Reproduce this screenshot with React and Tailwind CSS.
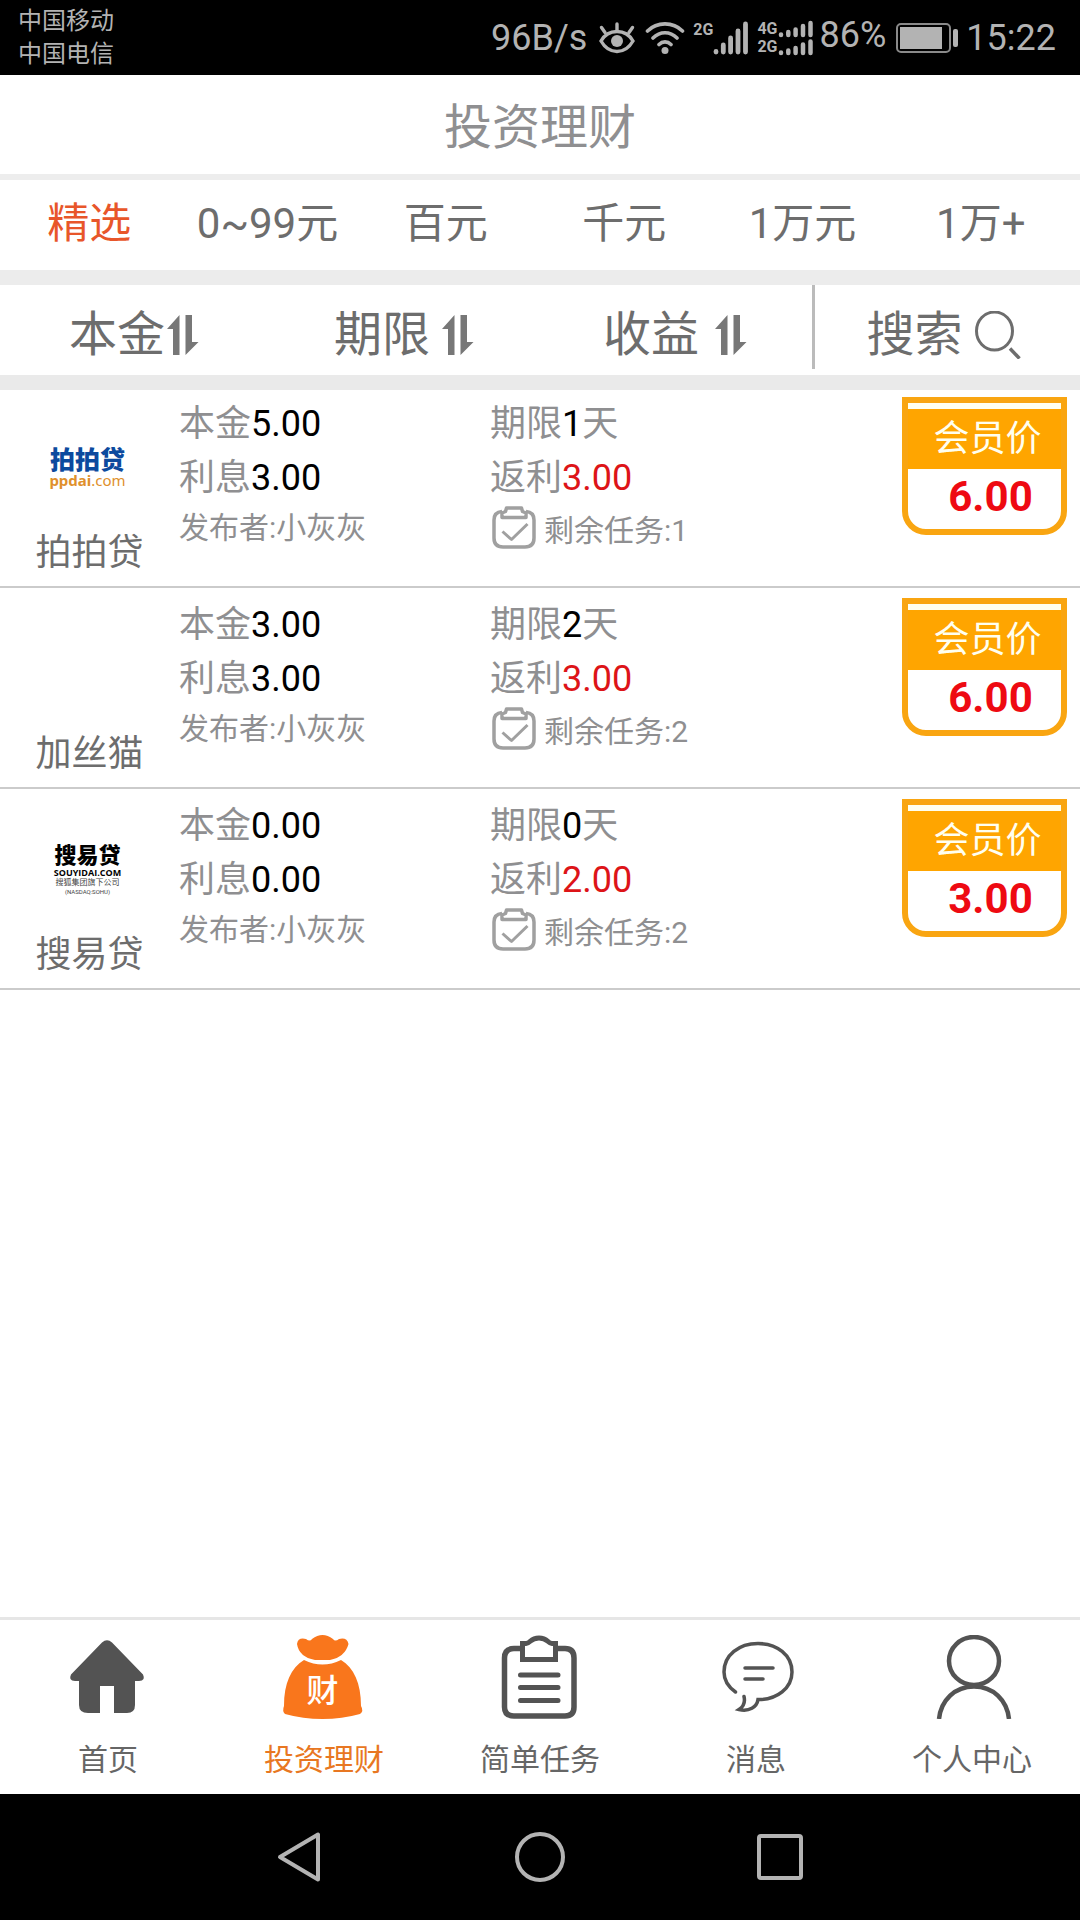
import { useState } from "react";
import clsx from "clsx";

const ranges = ["精选", "0~99元", "百元", "千元", "1万元", "1万+"];

const products = [
  { id: 1, name: "拍拍贷", Logo: PpdaiLogo, principal: "5.00", interest: "3.00", days: 1, rebate: "3.00", left: 1, price: "6.00" },
  { id: 2, name: "加丝猫", Logo: null, principal: "3.00", interest: "3.00", days: 2, rebate: "3.00", left: 2, price: "6.00" },
  { id: 3, name: "搜易贷", Logo: SouyidaiLogo, principal: "0.00", interest: "0.00", days: 0, rebate: "2.00", left: 2, price: "3.00" },
];

const navItems = [
  { label: "首页", Icon: HomeIcon },
  { label: "投资理财", Icon: BagIcon, active: true },
  { label: "简单任务", Icon: ClipboardIcon },
  { label: "消息", Icon: MessageIcon },
  { label: "个人中心", Icon: PersonIcon },
];

function PpdaiLogo() {
  return (
    <div className="flex flex-col items-center whitespace-nowrap">
      <span className="text-[25px] leading-[24px] font-black text-[#0c4a9e]">拍拍贷</span>
      <span className="font-['Noto_Sans'] text-[15px] leading-[14px] text-[#e0902c]">
        <b>ppdai</b>.com
      </span>
    </div>
  );
}

function SouyidaiLogo() {
  return (
    <div className="flex flex-col items-center whitespace-nowrap text-black">
      <span className="text-[22px] leading-[24px] font-black">搜易贷</span>
      <span className="font-['Open_Sans'] text-[9px] leading-[10px] font-bold">SOUYIDAI.COM</span>
      <span className="text-[8px] leading-[10px] text-[#444]">搜狐集团旗下公司</span>
      <span className="text-[6px] leading-[7px] text-[#444]">(NASDAQ:SOHU)</span>
    </div>
  );
}

function EyeIcon() {
  return (
    <svg className="h-8 w-9" viewBox="0 0 36 32" fill="none" stroke="currentColor" strokeWidth="3.4" strokeLinecap="round">
      <path d="M2 19C6 12 12 9.500 18 9.500S30 12 34 19C30 26 24 29.500 18 29.500S6 26 2 19Z" />
      <circle cx="18" cy="19" r="6" fill="currentColor" stroke="none" />
      <path d="M18 2v7M2.500 5.500l3.500 5M33.500 5.500l-3.500 5" />
    </svg>
  );
}

function WifiIcon() {
  return (
    <svg className="h-8 w-10" viewBox="0 0 40 32" fill="none" stroke="currentColor" strokeWidth="3.600" strokeLinecap="round">
      <path d="M2.500 9C12-.5 28-.5 37.500 9M8 16C15 9 25 9 32 16M14 22.500C17.500 19 22.500 19 26 22.500" />
      <circle cx="20" cy="28.500" r="3.500" fill="currentColor" stroke="none" />
    </svg>
  );
}

function SignalIcon() {
  return (
    <svg className="h-[34px] w-9" viewBox="0 0 36 34" stroke="currentColor" strokeWidth="4.800" strokeLinecap="round">
      <path d="M3 30.500v.5M10.300 24v7M17.600 17v14M25 10v21M32.500 3v28" />
    </svg>
  );
}

function DualSignalIcon() {
  return (
    <svg className="h-[36px] w-9" viewBox="0 0 36 36" stroke="currentColor" strokeWidth="4.500" strokeLinecap="round">
      <path d="M3 14.500v.5M10.300 12v3M17.600 9.500v5.500M25 6v9M32.500 3v12" />
      <path d="M3 32.500v.5M10.300 30.500v2.500M17.600 28v5M25 24.500v8.500M32.500 21.500v11.500" />
    </svg>
  );
}

function BatteryIcon() {
  return (
    <svg className="h-[30px] w-[62px]" viewBox="0 0 62 30" fill="none">
      <rect x="1" y="1" width="53" height="28" rx="4" stroke="#8a8a8a" strokeWidth="2" />
      <rect x="4" y="4" width="42" height="22" fill="currentColor" />
      <rect x="57" y="6" width="5" height="18" rx="2" fill="currentColor" />
    </svg>
  );
}

function SortIcon() {
  return (
    <svg className="h-10 w-8" viewBox="0 0 32 40" fill="#777">
      <path d="M12.500 0v40H6V14H0Z" />
      <path d="M18.500 0v40L31.500 27H25V0Z" />
    </svg>
  );
}

function SearchIcon() {
  return (
    <svg className="h-12 w-[46px]" viewBox="0 0 46 48" fill="none" stroke="#6d6d6d" strokeWidth="3">
      <ellipse cx="19.500" cy="20" rx="18" ry="19" />
      <path d="M35 37.500l9.500 10" strokeWidth="3.500" />
    </svg>
  );
}

function TaskIcon() {
  return (
    <svg className="h-[43px] w-11" viewBox="0 0 44 43" fill="none" stroke="#a0a0a0" strokeWidth="3.500" strokeLinejoin="round">
      <path d="M10 5.500C4 6 2 9 2 14v18c0 6 3 9 9 9h22c6 0 9-3 9-9V14c0-5-2-8-8-8.500" />
      <path d="M14.500 2h15l1 3.500 3.500 1.500v4.500h-24V7L13.500 5.500Z" />
      <path d="M10.500 25.500l9 8L35.500 18" strokeWidth="3" />
    </svg>
  );
}

function HomeIcon() {
  return (
    <svg className="size-21" viewBox="0 0 84 84" fill="#535353">
      <path d="M36 7.500Q41 3 46 7.500L77 39.500Q80 46 73 46H69V70Q69 78 61 78H48V51H34V78H22Q13 78 13 70V46H9Q2 46 5 39.500Z" />
    </svg>
  );
}

function BagIcon() {
  return (
    <svg className="size-21" viewBox="0 0 84 84" fill="#f9761c">
      <path d="M30 4Q40.500-4 51 4Q53 7 57 4Q65 2 66.500 9Q63 22 48 25H33Q17 22 15 9Q16 2 24 4Q28 7 30 4Z" />
      <path d="M22 25Q40.500 34 59 25C72 33 79 48 79 71Q82 76 78 79Q60 84 40.500 84T3 79Q0 76 2 71C2 48 9 33 22 25Z" />
      <text x="40.500" y="67" textAnchor="middle" fontSize="32" fontWeight="500" fill="#fff">财</text>
    </svg>
  );
}

function ClipboardIcon() {
  return (
    <svg className="size-21" viewBox="0 0 84 84" fill="none" stroke="#535353" strokeWidth="5.500">
      <path d="M24 13.500H16Q6.500 13.500 6.500 23V72Q6.500 81 16 81H67Q76 81 76 72V23Q76 13.500 67 13.500H58" />
      <path d="M24.500 8.500H28C33 8 32 3 41 3S49 8 54 8.500H57.500V24.500H24.500Z" strokeWidth="5" />
      <path d="M22.500 40H60M22.500 52.500H60M22.500 65.500H60" strokeLinecap="round" strokeWidth="5" />
    </svg>
  );
}

function MessageIcon() {
  return (
    <svg className="size-21" viewBox="0 0 84 84" fill="none" stroke="#535353" strokeWidth="3.500" strokeLinecap="round">
      <path d="M21.500 57C13 51 10 44 10 37C10 20 25 8.500 44 8.500S78 20 78 37C78 53 63 65 44 64.500C43 72 35 77 25 74.500Q32 70 30 61.500" />
      <path d="M31 33H59M31 44H49" />
    </svg>
  );
}

function PersonIcon() {
  return (
    <svg className="size-21" viewBox="0 0 84 84" fill="none" stroke="#535353" strokeWidth="4.500">
      <ellipse cx="44" cy="26" rx="25" ry="24" />
      <path d="M9 84C11 65 25 51.500 44 51.500S77 65 79 84" />
    </svg>
  );
}

function StatusBar() {
  return (
    <header className="flex h-[75px] items-center justify-between bg-black pl-[18px] pr-6 text-[#b3b3b3]">
      <div className="text-[24px] leading-[33px]">
        <p>中国移动</p>
        <p>中国电信</p>
      </div>
      <div className="flex items-center text-[36px] leading-[42px]">
        <span className="mr-3">96B/s</span>
        <EyeIcon />
        <span className="ml-2.5 mr-2"><WifiIcon /></span>
        <span className="mb-4 text-[16px] leading-[18px] font-bold">2G</span>
        <SignalIcon />
        <span className="ml-2 flex flex-col text-[16px] leading-[18px] font-bold">
          <span>4G</span>
          <span>2G</span>
        </span>
        <DualSignalIcon />
        <span className="ml-1.5 mb-1.5">86%</span>
        <span className="ml-2.5 mr-2"><BatteryIcon /></span>
        <span>15:22</span>
      </div>
    </header>
  );
}

function ProductRow({ item }) {
  const { Logo } = item;
  return (
    <li className="grid grid-cols-[179fr_311fr_590fr] border-b-2 border-[#cbcbcb] pt-2.5 text-[36px] leading-[54px] text-[#8f8f91] first:pt-[7px]">
      <div className="flex flex-col items-center">
        <div className="flex h-[129px] items-center pt-3 pr-1">{Logo && <Logo />}</div>
        <p className="pb-1.5 text-[#6d6d6d]">{item.name}</p>
      </div>
      <div>
        <p>本金<span className="text-black">{item.principal}</span></p>
        <p>利息<span className="text-black">{item.interest}</span></p>
        <p className="text-[30px] leading-[46px]">发布者:小灰灰</p>
      </div>
      <div className="flex items-start justify-between pr-[13px]">
        <div>
          <p>期限<span className="text-black">{item.days}</span>天</p>
          <p>返利<span className="text-[#dd1418]">{item.rebate}</span></p>
          <div className="flex items-start gap-2 pt-px pl-0.5 text-[30px] leading-[50px]">
            <TaskIcon />
            <p>剩余任务:{item.left}</p>
          </div>
        </div>
        <div className="w-[165px] rounded-b-3xl border-6 border-[#f9a511] bg-white text-center">
          <div className="border-t-6 border-[#fffff0] bg-[#ffa500] pl-1.5 text-[#fffff0]">
            <p className="h-15 leading-[60px]">会员价</p>
          </div>
          <p className="h-15 pl-3 text-[42px] leading-[56px] font-bold text-[#ee0a12]">{item.price}</p>
        </div>
      </div>
    </li>
  );
}

export default function App() {
  const [range, setRange] = useState(ranges[0]);

  return (
    <div className="flex min-h-screen flex-col bg-white font-[Roboto,'Noto_Sans_CJK_SC',sans-serif]">
      <StatusBar />

      <h1 className="border-b-6 border-[#ededed] pt-[18px] pb-[11px] text-center text-[48px] leading-[70px] text-[#8f8f91]">
        投资理财
      </h1>

      <nav className="grid h-[105px] grid-cols-6 border-b-15 border-[#ececec] pr-2.5 pb-1 text-[42px] text-[#6d6d6d]">
        {ranges.map((label) => (
          <button
            key={label}
            onClick={() => setRange(label)}
            className={clsx("whitespace-nowrap", range === label && "text-[#e8562a]")}
          >
            {label}
          </button>
        ))}
      </nav>

      <div className="grid h-[105px] grid-cols-4 border-b-15 border-[#eaeaea] text-[48px] leading-[60px] text-[#6d6d6d]">
        <button className="flex items-center justify-center gap-0.5 pt-2.5 pr-0.5">本金<SortIcon /></button>
        <button className="flex items-center justify-center gap-3 pt-2.5 pr-0.5">期限<SortIcon /></button>
        <button className="flex items-center justify-center gap-4 pt-2.5">收益<SortIcon /></button>
        <button className="mb-1.5 ml-0.5 flex items-center justify-center gap-3 border-l-3 border-[#bbb] pt-4 pr-2">搜索<SearchIcon /></button>
      </div>

      <main className="flex-1">
        <ul>
          {products.map((item) => (
            <ProductRow key={item.id} item={item} />
          ))}
        </ul>
      </main>

      <nav className="grid grid-cols-5 border-t-3 border-[#e6e6e6] pt-[15px] pb-2.5">
        {navItems.map(({ label, Icon, active }) => (
          <a
            key={label}
            href="#"
            className={clsx(
              "flex flex-col items-center gap-[17px] text-[30px] leading-[48px]",
              active ? "text-[#e87722]" : "text-[#666]"
            )}
          >
            <Icon />
            {label}
          </a>
        ))}
      </nav>

      <footer className="flex h-[126px] justify-center bg-black">
        <div className="grid w-2/3 grid-cols-3 place-items-center">
          <button aria-label="返回">
            <svg className="size-13" viewBox="0 0 52 52" fill="none" stroke="#b3b3b3" strokeWidth="4" strokeLinejoin="round">
              <path d="M44 3.500V48.500L6 26Z" />
            </svg>
          </button>
          <button aria-label="主屏幕">
            <svg className="size-13" viewBox="0 0 52 52" fill="none" stroke="#b3b3b3" strokeWidth="4">
              <circle cx="26" cy="26" r="23" />
            </svg>
          </button>
          <button aria-label="最近任务">
            <svg className="size-13" viewBox="0 0 52 52" fill="none" stroke="#b3b3b3" strokeWidth="4">
              <rect x="5" y="5" width="42" height="42" rx="2" />
            </svg>
          </button>
        </div>
      </footer>
    </div>
  );
}
